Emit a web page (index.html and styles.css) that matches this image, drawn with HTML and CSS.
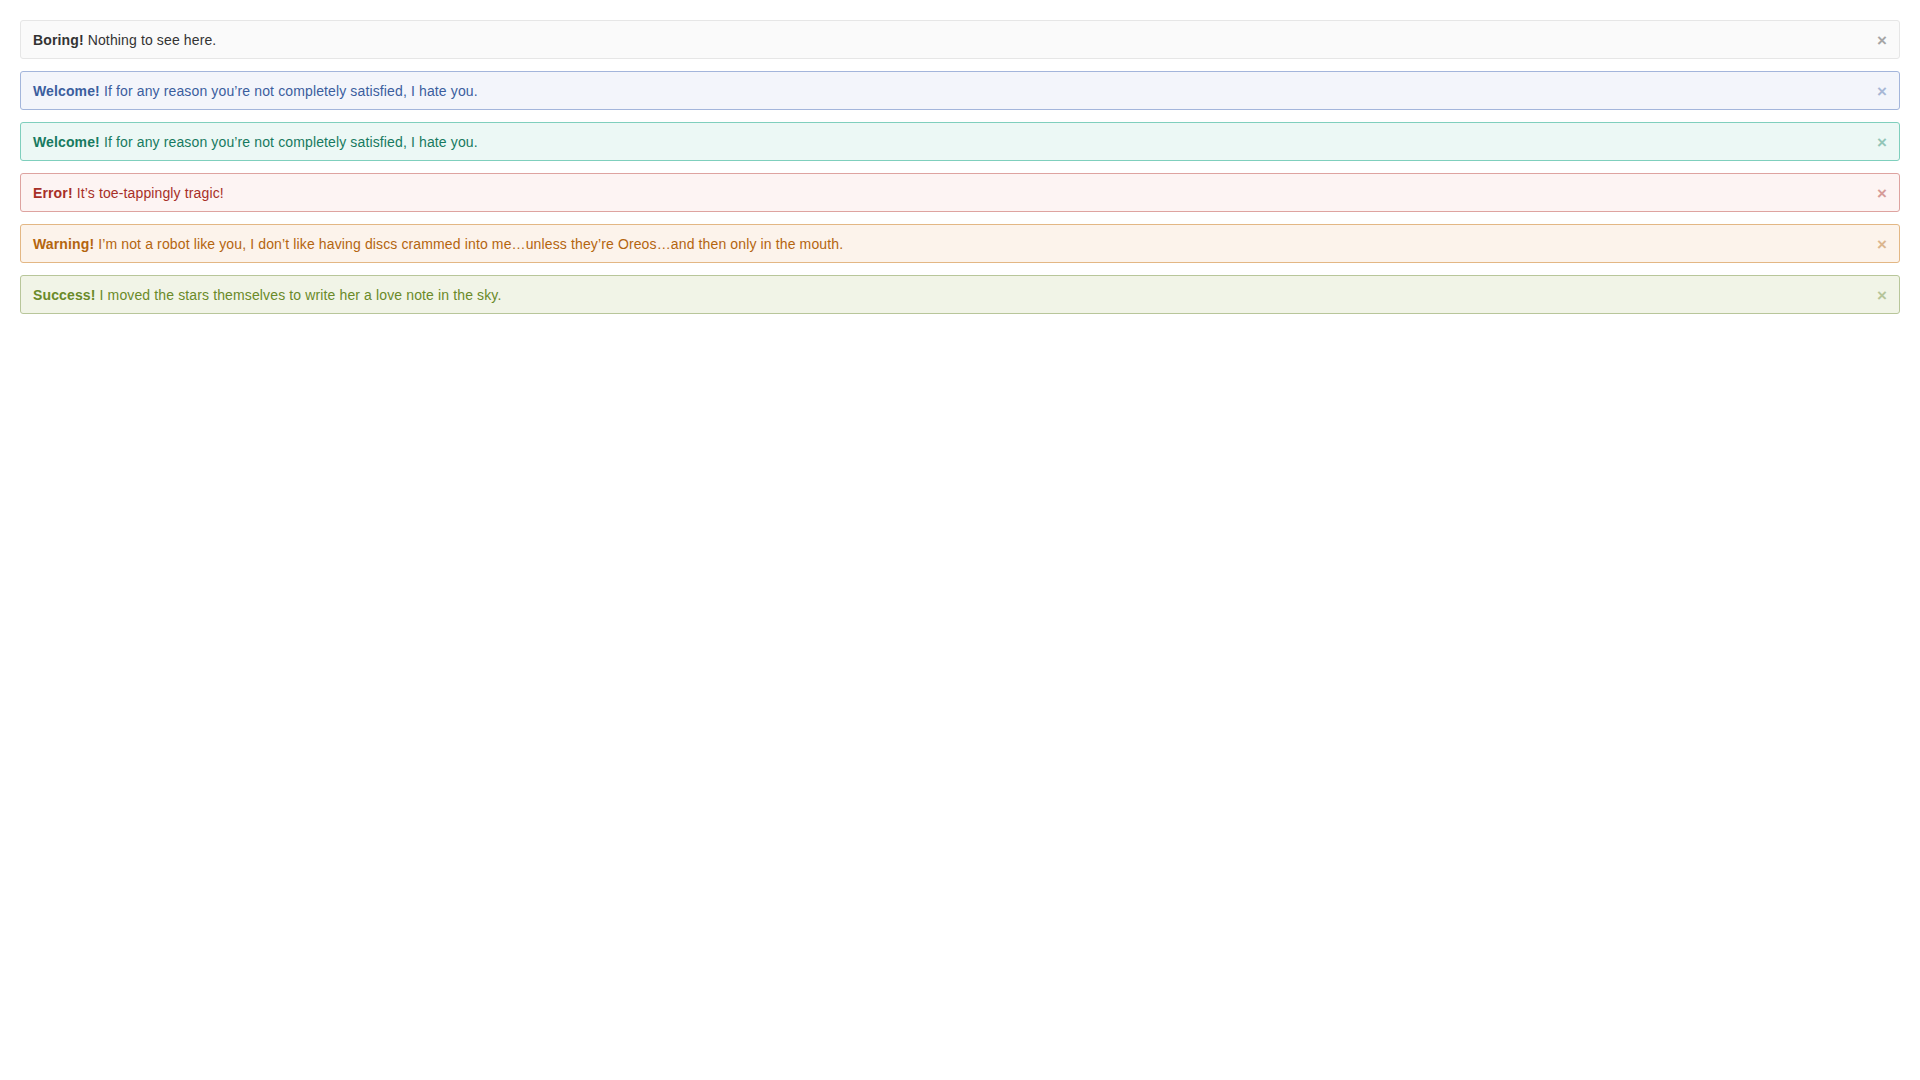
FILE: index.html
```html
<!DOCTYPE html>
<html lang="en-us">
<head>
    <meta charset="utf-8">
    <meta name="viewport" content="width=device-width">
    <title>Alerts</title>
    <link rel="stylesheet" href="styles.css">
</head>
<body>
    <div id="alerts">
        <div class="alert">
            <strong>Boring!</strong> Nothing to see here.
            <button class="close">&times;</button>
        </div>
        <div class="alert alert-info">
            <strong>Welcome!</strong> If for any reason you’re not completely satisfied, I hate you.
            <button class="close">&times;</button>
        </div>
        <div class="alert alert-teal">
            <strong>Welcome!</strong> If for any reason you’re not completely satisfied, I hate you.
            <button class="close">&times;</button>
        </div>
        <div class="alert alert-error">
            <strong>Error!</strong> It’s toe-tappingly tragic!
            <button class="close">&times;</button>
        </div>
        <div class="alert alert-warning">
            <strong>Warning!</strong> I’m not a robot like you, I don’t like having discs crammed into me…unless they’re Oreos…and then only in the mouth.
            <button class="close">&times;</button>
        </div>
        <div class="alert alert-success">
            <strong>Success!</strong> I moved the stars themselves to write her a love note in the sky.
            <button class="close">&times;</button>
        </div>
    </div>
</body>
</html>
```

FILE: styles.css
```css
body {
    margin: 0;
    font-family: "Liberation Sans", Arial, sans-serif;
    font-size: 14px;
    background: #fff;
}

#alerts {
    padding: 20px;
    display: flex;
    flex-direction: column;
    gap: 12px;
}

.alert {
    position: relative;
    padding: 9px 40px 8px 12px;
    line-height: 20px;
    letter-spacing: 0.13px;
    border: 1px solid #e6e6e6;
    border-radius: 3px;
    background-color: #fafafa;
    color: #333;
}

.close {
    position: absolute;
    right: 12px;
    top: 10px;
    padding: 0;
    margin: 0;
    border: none;
    background: none;
    font-family: "Liberation Sans", Arial, sans-serif;
    font-size: 17px;
    font-weight: 700;
    line-height: 20px;
    color: #a6a6a6;
    cursor: pointer;
}

.alert-info {
    background-color: #f3f5fb;
    border-color: #a3b5db;
    color: #3b5e9e;
}
.alert-info .close { color: #a8b8d6; }

.alert-teal {
    background-color: #ecf8f5;
    border-color: #7fcfbd;
    color: #177a60;
}
.alert-teal .close { color: #93c6b8; }

.alert-error {
    background-color: #fdf4f3;
    border-color: #dea3a0;
    color: #a72f27;
}
.alert-error .close { color: #d69c98; }

.alert-warning {
    background-color: #fcf3eb;
    border-color: #e3b784;
    color: #b4650f;
}
.alert-warning .close { color: #dbb68e; }

.alert-success {
    background-color: #f1f4e7;
    border-color: #b8c69a;
    color: #6a8a29;
}
.alert-success .close { color: #b6c59a; }
```
